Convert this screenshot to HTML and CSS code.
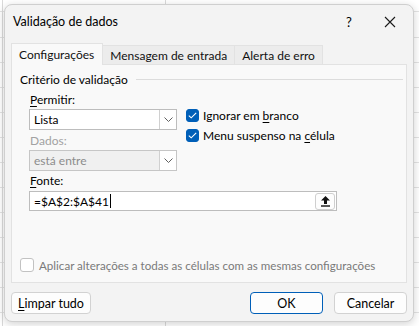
FILE: index.html
```html
<!DOCTYPE html>
<html lang="pt">
<head>
  <meta charset="UTF-8" />
  <title>Validação de dados</title>
  <link rel="stylesheet" href="styles.css">
</head>
<body>
  <div class="dialog">
    <div class="titlebar">
      <span class="title">Validação de dados</span>
      <span class="help">?</span>
      <span class="close">
        <svg width="12" height="12" viewBox="0 0 12 12"><path d="M1 1 L11 11 M11 1 L1 11" stroke="#1a1a1a" stroke-width="1.1" fill="none"/></svg>
      </span>
    </div>

    <div class="tabs">
      <div class="tab active">Configurações</div>
      <div class="tab">Mensagem de entrada</div>
      <div class="tab">Alerta de erro</div>
    </div>

    <div class="panel">
      <div class="group-title">
        <span>Critério de validação</span>
        <div class="rule"></div>
      </div>

      <div class="criteria">
        <div class="left-col">
          <div class="label"><u>P</u>ermitir:</div>
          <div class="select">
            <span class="value">Lista</span>
            <span class="drop"><svg width="9" height="5" viewBox="0 0 9 5"><path d="M0.5 0.5 L4.5 4.5 L8.5 0.5" stroke="#606060" fill="none"/></svg></span>
          </div>
          <div class="label disabled">Dados:</div>
          <div class="select off">
            <span class="value">está entre</span>
            <span class="drop"><svg width="9" height="5" viewBox="0 0 9 5"><path d="M0.5 0.5 L4.5 4.5 L8.5 0.5" stroke="#606060" fill="none"/></svg></span>
          </div>
        </div>
        <div class="checks">
          <div class="check-row">
            <span class="box on"><svg width="9" height="7" viewBox="0 0 9 7"><path d="M0.8 3.6 L3.2 5.8 L8.2 0.9" stroke="#fff" stroke-width="1.1" fill="none"/></svg></span>
            <span>Ignorar em <u>b</u>ranco</span>
          </div>
          <div class="check-row">
            <span class="box on"><svg width="9" height="7" viewBox="0 0 9 7"><path d="M0.8 3.6 L3.2 5.8 L8.2 0.9" stroke="#fff" stroke-width="1.1" fill="none"/></svg></span>
            <span>Menu suspenso na <u>c</u>élula</span>
          </div>
        </div>
      </div>

      <div class="source">
        <div class="label"><u>F</u>onte:</div>
        <div class="input">
          <span class="value">=$A$2:$A$41<span class="caret"></span></span>
          <span class="pick">
            <svg width="11" height="12" viewBox="0 0 11 12"><path d="M5.5 1 L10 5.5 L7 5.5 L7 9 L4 9 L4 5.5 L1 5.5 Z" fill="#111"/><rect x="1" y="10.3" width="9" height="1.4" fill="#111"/></svg>
          </span>
        </div>
      </div>

      <div class="apply">
        <span class="box"></span>
        <span>Aplicar alterações a todas as células com as mesmas configurações</span>
      </div>
    </div>

    <div class="footer">
      <button class="btn"><u>L</u>impar tudo</button>
      <div class="spacer"></div>
      <button class="btn primary">OK</button>
      <button class="btn">Cancelar</button>
    </div>
  </div>
</body>
</html>
```

FILE: styles.css
```css
:root {
  --texto: #000;
  --cinza: #a2a2a2;
  --borda: #bdbdbd;
  --azul: #005fb8;
}

html, body {
  margin: 0;
  height: 100%;
}

body {
  font-family: 'Lato', 'Noto Sans', sans-serif;
  font-size: 12px;
  color: var(--texto);
  background-color: #fff;
  background-image:
    linear-gradient(to right, transparent 165px, #dadada 165px, #dadada 166px, transparent 166px),
    linear-gradient(to right, transparent 2px, #dadada 2px, #dadada 3px, transparent 3px),
    repeating-linear-gradient(to bottom, transparent 0, transparent 24px, #e3e3e3 24px, #e3e3e3 25px);
  background-position: 0 0, 0 0, 0 13px;
  overflow: hidden;
  white-space: nowrap;
}

u {
  text-decoration: underline;
  text-underline-offset: 2px;
}

.dialog {
  box-sizing: border-box;
  margin: 4px 0 0 4px;
  width: 410px;
  height: 318px;
  background: #f3f3f3;
  border: 1px solid #cfcfcf;
  border-radius: 8px;
  box-shadow: 0 2px 8px rgba(0, 0, 0, 0.18);
  display: flex;
  flex-direction: column;
}

.titlebar {
  height: 33px;
  display: flex;
  align-items: center;
  padding-left: 8px;
}

.title {
  flex: 1;
  font-size: 12.5px;
}

.help {
  width: 20px;
  text-align: center;
  font-size: 13px;
  margin-right: 25px;
}

.close {
  width: 12px;
  margin-right: 17px;
  display: flex;
}

.tabs {
  display: flex;
  align-items: flex-end;
  margin: 4px 0 0 6px;
  height: 22px;
}

.tab {
  box-sizing: border-box;
  height: 19px;
  padding: 0 7px;
  border: 1px solid #e2e2e2;
  border-bottom: none;
  border-left: none;
  background: #ececec;
  display: flex;
  align-items: center;
  color: #111;
}

.tab.active {
  height: 22px;
  margin-bottom: -1px;
  background: #f9f9f9;
  border-left: 1px solid #e2e2e2;
  padding: 0 8px 0 7px;
  position: relative;
  z-index: 1;
}

.panel {
  box-sizing: border-box;
  margin: 0 0 0 6px;
  width: 396px;
  height: 219px;
  background: #f9f9f9;
  border: 1px solid #e2e2e2;
  padding: 6px 0 0 8px;
  display: flex;
  flex-direction: column;
}

.group-title {
  display: flex;
  align-items: center;
  height: 17px;
}

.rule {
  flex: 1;
  height: 1px;
  background: #dcdcdc;
  margin: 0 3px 0 8px;
}

.criteria {
  display: flex;
  padding-left: 9px;
  margin-top: 3px;
}

.left-col {
  width: 148px;
  display: flex;
  flex-direction: column;
}

.label {
  height: 18px;
  line-height: 18px;
  margin-left: 1px;
}

.label.disabled {
  color: var(--cinza);
  margin-top: 2px;
}

.select {
  box-sizing: border-box;
  height: 21px;
  border: 1px solid var(--borda);
  background: #fff;
  display: flex;
  align-items: stretch;
}

.select .value {
  flex: 1;
  padding-left: 4px;
  display: flex;
  align-items: center;
}

.select .drop {
  width: 16px;
  border-left: 1px solid #d0d0d0;
  display: flex;
  align-items: center;
  justify-content: center;
  background: #fff;
}

.select.off {
  background: #f0f0f0;
  color: #8c8c8c;
  border-color: #c6c6c6;
}

.checks {
  margin-left: 9px;
  padding-top: 18px;
  display: flex;
  flex-direction: column;
  gap: 7px;
}

.check-row {
  display: flex;
  align-items: center;
  gap: 4px;
  height: 13px;
}

.box {
  box-sizing: border-box;
  width: 13px;
  height: 13px;
  border-radius: 3px;
  border: 1px solid #8a8a8a;
  background: #fff;
  display: flex;
  align-items: center;
  justify-content: center;
  flex-shrink: 0;
}

.box.on {
  background: var(--azul);
  border-color: var(--azul);
}

.source {
  padding-left: 9px;
  margin-top: 1px;
}

.input {
  box-sizing: border-box;
  width: 308px;
  height: 20px;
  margin-top: 1px;
  border: 1px solid var(--borda);
  background: #fff;
  display: flex;
  align-items: center;
  padding: 0 1px 0 4px;
}

.input .value {
  flex: 1;
  display: flex;
  align-items: center;
}

.caret {
  display: inline-block;
  width: 1px;
  height: 14px;
  background: #000;
  margin-left: 1px;
}

.pick {
  box-sizing: border-box;
  width: 20px;
  height: 17px;
  border: 1px solid #cfcfcf;
  border-radius: 3px;
  display: flex;
  align-items: center;
  justify-content: center;
  background: #fdfdfd;
}

.apply {
  margin-top: auto;
  margin-bottom: 10px;
  display: flex;
  align-items: center;
  gap: 5px;
  color: #7a7a7a;
  font-size: 11.6px;
}

.apply .box {
  border-color: #c2c2c2;
  border-radius: 3px;
  width: 14px;
  height: 14px;
}

.footer {
  display: flex;
  align-items: center;
  padding: 9px 6px 0 6px;
  gap: 11px;
}

.spacer {
  flex: 1;
}

.btn {
  box-sizing: border-box;
  height: 22px;
  min-width: 73px;
  padding: 0 6px;
  font-family: inherit;
  font-size: 12.5px;
  color: #000;
  background: #fdfdfd;
  border: 1px solid #d2d2d2;
  border-radius: 4px;
}

.btn.primary {
  border-color: var(--azul);
}
```
